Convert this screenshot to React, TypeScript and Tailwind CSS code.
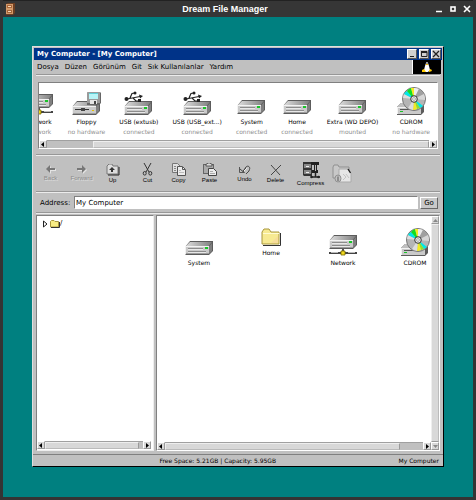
import { useId, useState } from "react";
import type { ReactNode } from "react";

type Kind = "drive" | "usb" | "floppy" | "network" | "cdrom";

const DRIVES: { name: string; status: string; kind: Kind }[] = [
  { name: "Network", status: "network", kind: "network" },
  { name: "Floppy", status: "no hardware", kind: "floppy" },
  { name: "USB (extusb)", status: "connected", kind: "usb" },
  { name: "USB (USB_ext...)", status: "connected", kind: "usb" },
  { name: "System", status: "connected", kind: "drive" },
  { name: "Home", status: "connected", kind: "drive" },
  { name: "Extra (WD DEPO)", status: "mounted", kind: "drive" },
  { name: "CDROM", status: "no hardware", kind: "cdrom" },
];

const MENU = ["Dosya", "Düzen", "Görünüm", "Git", "Sık Kullanılanlar", "Yardım"];

// Bevelled box of a disk drive, origin at its top left corner
function DriveBody({ y, slot = false }: { y: number; slot?: boolean }) {
  const id = useId();
  return (
    <g transform={`translate(0 ${y})`}>
      <defs>
        <linearGradient id={id} x1="0" x2="1" y1="0" y2="0">
          <stop offset="0" stopColor="#dcdcdc" />
          <stop offset="1" stopColor="#7e7e7e" />
        </linearGradient>
      </defs>
      <path d="M5 0H28V10L24 14H1L0 13V6Z" fill="#5c5c5c" />
      <path d="M5 1H27L23.500 5H1Z" fill={`url(#${id})`} />
      <path d="M24 5.500L27 2V10L24 13Z" fill="#808080" />
      <rect x="0" y="5" width="24" height="8" fill="#cacaca" />
      <path d="M0 5H24V6H1V13H0Z" fill="#f2f2f2" />
      <rect x="1" y="12" width="23" height="1" fill="#9c9c9c" />
      {slot ? (
        <>
          <rect x="3" y="8" width="14" height="1" fill="#333" />
          <rect x="9" y="7" width="4" height="3" fill="#444" />
          <rect x="20" y="9" width="2" height="1" fill="#e5c100" />
        </>
      ) : (
        <>
          <path d="M3 7.500H18M3 10.500H21" stroke="#8c8c8c" />
          <path d="M3 8.500H18M3 11.500H21" stroke="#e8e8e8" />
          <rect x="20" y="6" width="3" height="2" fill="#18c428" />
        </>
      )}
    </g>
  );
}

function Disc() {
  return (
    <g transform="translate(17 12)">
      <circle r="11.5" fill="#b5b5b5" stroke="#777" strokeWidth="1" />
      <path d="M0 0L-11 -1A11 11 0 0 1 -10 -5Z" fill="#ddd" />
      <path d="M0 0L-10 -5A11 11 0 0 1 -7 -8Z" fill="#00e8e8" />
      <path d="M0 0L-7 -8A11 11 0 0 1 -3 -11Z" fill="#10e020" />
      <path d="M0 0L-3 -11A11 11 0 0 1 0 -11Z" fill="#f4ec20" />
      <path d="M0 0L0 -11A11 11 0 0 1 5 -10Z" fill="#ececec" />
      <path d="M0 0L5 -10A11 11 0 0 1 10 -5Z" fill="#a0a0a0" />
      <path d="M0 0L10 -5A11 11 0 0 1 11 1Z" fill="#d6d6d6" />
      <path d="M0 0L9 7A11 11 0 0 1 6 9Z" fill="#00e8e8" />
      <path d="M0 0L6 9A11 11 0 0 1 3 10Z" fill="#90e030" />
      <path d="M0 0L3 10A11 11 0 0 1 -1 11Z" fill="#f4ec20" />
      <path d="M0 0L-1 11A11 11 0 0 1 -6 9Z" fill="#ddd" />
      <circle r="3.3" fill="#eee" stroke="#333" strokeWidth="1" />
      <circle r="1.4" fill="#fff" stroke="#777" strokeWidth="0.6" />
    </g>
  );
}

function DriveIcon({ kind }: { kind: Kind }) {
  return (
    <svg width="29" height="28" viewBox="0 0 29 28" aria-hidden="true" className="shrink-0">
      {kind === "drive" && <DriveBody y={13} />}
      {kind === "usb" && (
        <>
          <DriveBody y={14} />
          <path d="M3 12L16 9.500M6 11L8 6.500L11 6M9 11L12 14H15" fill="none" stroke="#222" strokeWidth="1.200" />
          <circle cx="2.500" cy="12" r="2" fill="#222" />
          <circle cx="11" cy="6" r="1.500" fill="#222" />
          <path d="M15 7.500L19 9L16 11.500Z" fill="#222" />
          <rect x="14" y="12" width="3" height="3" fill="#222" />
        </>
      )}
      {kind === "floppy" && (
        <>
          <DriveBody y={14} slot />
          <path d="M16 5H28L29 6V16L27 18H15V6Z" fill="#666" />
          <path d="M16 5H28V16H15V6Z" fill="#9a9a9a" />
          <rect x="17" y="6" width="9" height="6" fill="#b8f4f6" />
          <rect x="17" y="6" width="9" height="1" fill="#5fd0d8" />
          <rect x="18" y="13" width="7" height="4" fill="#e6e6e6" />
          <rect x="22" y="14" width="2" height="3" fill="#444" />
        </>
      )}
      {kind === "network" && (
        <>
          <DriveBody y={7} />
          <rect x="13" y="21" width="2" height="3" fill="#555" />
          <rect x="0" y="24" width="28" height="2" fill="#444" />
          <rect x="2" y="24" width="7" height="1" fill="#bbb" />
          <rect x="19" y="24" width="7" height="1" fill="#bbb" />
          <path d="M12 23H16V27H12Z" fill="#f0d820" stroke="#776a00" strokeWidth="0.8" />
        </>
      )}
      {kind === "cdrom" && (
        <>
          <path d="M4 16H26L27 17V25L24 28H0V20Z" fill="#5c5c5c" />
          <path d="M4 16H26L23 20H0Z" fill="#c0c0c0" />
          <rect x="0" y="20" width="24" height="7" fill="#cacaca" />
          <path d="M0 20H24V21H1V27H0Z" fill="#f2f2f2" />
          <path d="M3 22.500H20" stroke="#555" />
          <rect x="3" y="24" width="3" height="1" fill="#18c428" />
          <Disc />
        </>
      )}
    </svg>
  );
}

function FolderIcon() {
  return (
    <svg width="20" height="18" viewBox="0 0 20 18" aria-hidden="true">
      <path d="M1 4L3 1H8L10 4H18V16H1Z" fill="#f7ea92" stroke="#a8963c" />
      <path d="M19.500 5V17.500H2" fill="none" stroke="#333" />
      <path d="M2 5.500H18" stroke="#fffbd0" />
      <path d="M10 15L17 8V15Z" fill="#f6dc9a" />
    </svg>
  );
}

function PenguinIcon() {
  return (
    <svg width="12" height="11" viewBox="0 0 12 11" aria-hidden="true">
      <path d="M5 1H7L8 4L9 8L7 10H4L3 8L4 4Z" fill="#fff" />
      <rect x="5" y="0" width="2" height="2" fill="#999" />
      <rect x="5" y="2" width="2" height="1" fill="#f5b800" />
      <path d="M1 8L3 7L5 10H1ZM8 8L10 7L11 9L8 10Z" fill="#ffcc00" />
    </svg>
  );
}

function CabinetIcon() {
  return (
    <svg width="10" height="12" viewBox="0 0 10 12" aria-hidden="true">
      <path d="M1 1L3 0H10V10L8 12H1Z" fill="#6d3f22" />
      <rect x="1" y="1" width="7" height="10" fill="#d39a6a" />
      <rect x="2" y="2" width="5" height="3" fill="#a8663a" />
      <rect x="2" y="7" width="5" height="3" fill="#a8663a" />
      <path d="M3 3.500H6M3 8.500H6" stroke="#f4d8b8" />
    </svg>
  );
}

type Tool = { label: string; icon: ReactNode; disabled?: boolean };

const TOOLS: Tool[][] = [
  [
    {
      label: "Back",
      disabled: true,
      icon: (
        <svg width="10" height="9" viewBox="0 0 10 9" aria-hidden="true">
          <path d="M1 5L5 1V4H10V6H5V9Z" fill="#e4e4e4" />
          <path d="M0 4L4 0V3H9V5H4V8Z" fill="#777" />
        </svg>
      ),
    },
    {
      label: "Forward",
      disabled: true,
      icon: (
        <svg width="10" height="9" viewBox="0 0 10 9" aria-hidden="true">
          <path d="M10 5L6 1V4H1V6H6V9Z" fill="#e4e4e4" />
          <path d="M9 4L5 0V3H0V5H5V8Z" fill="#777" />
        </svg>
      ),
    },
    {
      label: "Up",
      icon: (
        <svg width="14" height="12" viewBox="0 0 14 12" aria-hidden="true">
          <path d="M1 2L3 0H6L7 2H12V10H1Z" fill="#ddd" stroke="#777" />
          <path d="M13 3V11H2" fill="none" stroke="#222" />
          <path d="M6 3L9 6H7V8H5V6H3Z" fill="#333" />
        </svg>
      ),
    },
  ],
  [
    {
      label: "Cut",
      icon: (
        <svg width="11" height="13" viewBox="0 0 11 13" fill="none" stroke="#333" aria-hidden="true">
          <path d="M2 0L7 9M9 0L4 9" />
          <ellipse cx="2.700" cy="10.300" rx="1.500" ry="1.800" />
          <ellipse cx="8.300" cy="10.300" rx="1.500" ry="1.800" />
        </svg>
      ),
    },
    {
      label: "Copy",
      icon: (
        <svg width="14" height="13" viewBox="0 0 14 13" aria-hidden="true">
          <path d="M.5 .5H5.500L8.500 3.500V9.500H.5Z" fill="#e0e0e0" stroke="#777" />
          <path d="M2 3.500H4M2 5.500H4M2 7.500H4" stroke="#888" />
          <path d="M5.500 3.500H10.500L13.500 6.500V12.500H5.500Z" fill="#ececec" stroke="#555" />
          <path d="M10.500 4V6.500H13" fill="none" stroke="#555" />
          <path d="M7 7.500H9M7 9.500H12" stroke="#bbb" />
        </svg>
      ),
    },
    {
      label: "Paste",
      icon: (
        <svg width="14" height="13" viewBox="0 0 14 13" aria-hidden="true">
          <rect x=".5" y="1.500" width="10" height="9" fill="#aaa" stroke="#666" />
          <path d="M3 3V1H4L5 0H7L8 1H9V3Z" fill="#ddd" stroke="#444" strokeWidth=".8" />
          <path d="M5.500 5.500H10.500L13.500 8.500V12.500H5.500Z" fill="#ececec" stroke="#444" />
          <path d="M7 8.500H10M7 10.500H12" stroke="#aaa" />
        </svg>
      ),
    },
  ],
  [
    {
      label: "Undo",
      icon: (
        <svg width="13" height="11" viewBox="0 0 13 11" fill="none" aria-hidden="true">
          <path d="M1.500 3V8.500H6.500L5 7L8 4" stroke="#555" />
          <path d="M2 5L5 7.500L8 3C10 1 12.500 3 11.500 5.500C11 8 9 8.500 8 10" stroke="#444" />
          <path d="M6 7L9 4" stroke="#eee" />
        </svg>
      ),
    },
    {
      label: "Delete",
      icon: (
        <svg width="12" height="12" viewBox="0 0 12 12" fill="none" aria-hidden="true">
          <path d="M1 1L10 11M11 1L1 11" stroke="#444" />
        </svg>
      ),
    },
  ],
  [
    {
      label: "Compress",
      icon: (
        <svg width="18" height="18" viewBox="0 0 18 18" aria-hidden="true">
          <path d="M1 1H10V15H2L1 14Z" fill="#333" />
          <rect x="2" y="3" width="7" height="4" fill="#888" />
          <rect x="2" y="9" width="7" height="4" fill="#888" />
          <path d="M4 5.500H7M4 11.500H7" stroke="#eee" />
          <path d="M9 1H17V4H15V9H16V12H10V9H12V4H9Z" fill="#222" />
          <rect x="13" y="4" width="1" height="6" fill="#bbb" />
          <path d="M13.500 12V16M9 16H18" stroke="#222" strokeWidth="1.500" />
          <circle cx="9.500" cy="16" r="1.300" fill="#222" />
          <circle cx="16.500" cy="16" r="1.300" fill="#222" />
        </svg>
      ),
    },
    {
      label: "",
      disabled: true,
      icon: (
        <svg width="20" height="19" viewBox="0 0 20 19" aria-hidden="true">
          <path d="M1 3L2 1H6L7 3H17V14H1Z" fill="#c8c8c8" stroke="#909090" />
          <path d="M7 5H16L19 9V18H7Z" fill="#e6e6e6" stroke="#aaa" />
          <path d="M16 5L18.500 9" stroke="#222" strokeWidth="1.400" />
          <ellipse cx="6" cy="14.500" rx="3" ry="3.500" fill="#c4c4c4" stroke="#909090" />
          <path d="M6 12.500V17" stroke="#777" strokeWidth="1.400" />
          <path d="M11 10L14 13L11 16M14 10L17 14" fill="none" stroke="#c4c4c4" />
        </svg>
      ),
    },
  ],
];

function ToolButton({ tool }: { tool: Tool }) {
  return (
    <button
      type="button"
      disabled={tool.disabled}
      aria-label={tool.label || "Properties"}
      className="flex w-[31px] flex-col items-center justify-center gap-px"
    >
      {tool.icon}
      {tool.label && (
        <span
          className={
            tool.disabled
              ? "font-['Liberation_Sans'] text-[6px] leading-[7px] text-[#8c8c8c] [text-shadow:1px_1px_0_#ddd]"
              : "font-['Liberation_Sans'] text-[6px] leading-[7px] text-black"
          }
        >
          {tool.label}
        </span>
      )}
    </button>
  );
}

function Separator() {
  return <div className="mx-[3px] h-[2px] shrink-0 border-t border-b border-t-[#979797] border-b-[#ececec]" />;
}

function Arrow({ dir }: { dir: "left" | "right" | "up" | "down" }) {
  const paths = {
    left: "M4 1V6L1 3.500Z",
    right: "M2 1V6L5 3.500Z",
    up: "M1 5H6L3.500 2Z",
    down: "M1 2H6L3.500 5Z",
  };
  const vertical = dir === "up" || dir === "down";
  return (
    <button
      type="button"
      aria-label={`Scroll ${dir}`}
      className="flex size-2 shrink-0 items-center justify-center border border-t-white border-l-white border-r-[#999] border-b-[#999] bg-[#d8d8d8]"
    >
      <svg width="7" height="7" viewBox="0 0 7 7" className="shrink-0" aria-hidden="true">
        <path d={paths[dir]} fill={vertical ? "#888" : "#000"} />
      </svg>
    </button>
  );
}

// start and size place the handle on its track, in percent
function HScroll({ start = 0, size }: { start?: number; size: number }) {
  return (
    <div className="flex h-2 shrink-0 bg-[#c0c0c0]">
      <Arrow dir="left" />
      <div className="flex-1 border-t border-[#a0a0a0]">
        <div
          className="h-full border border-t-[#eee] border-l-[#eee] border-r-[#999] border-b-[#bbb] bg-[#d8d8d8]"
          style={{ marginLeft: `${start}%`, width: `${size}%` }}
        />
      </div>
      <Arrow dir="right" />
    </div>
  );
}

function TitleButton({ label, children }: { label: string; children: ReactNode }) {
  return (
    <button
      type="button"
      aria-label={label}
      className="flex h-[10px] w-[10px] items-center justify-center border border-t-white border-l-white border-r-[#555] border-b-[#555] bg-[#d0d0d0]"
    >
      <svg width="8" height="8" viewBox="0 0 8 8" fill="none" stroke="#222" className="shrink-0" aria-hidden="true">
        {children}
      </svg>
    </button>
  );
}

function FileItem({ name, children }: { name: string; children: ReactNode }) {
  return (
    <div className="flex flex-col items-center gap-[3px] text-[6px] leading-2 text-black">
      {children}
      <span>{name}</span>
    </div>
  );
}

export default function App() {
  const [address, setAddress] = useState("My Computer");

  return (
    <div className="flex min-h-screen flex-col border-x-[3px] border-b-[3px] border-[#343434] bg-[#008080] font-['DejaVu_Sans',sans-serif] text-[7px] text-black">
      <header className="flex h-[17px] shrink-0 items-center border-t border-[#222] bg-[#363636] px-[2px] text-white">
        <CabinetIcon />
        <h1 className="flex-1 text-center font-['Liberation_Sans'] text-[9px] leading-3 font-bold">
          Dream File Manager
        </h1>
        <div className="flex items-center justify-end gap-[6px]">
          <button type="button" aria-label="Minimize">
            <svg width="8" height="8" viewBox="0 0 8 8" className="block">
              <path d="M1 6.500H7" stroke="#fff" strokeWidth="1.500" />
            </svg>
          </button>
          <button type="button" aria-label="Maximize">
            <svg width="8" height="8" viewBox="0 0 8 8" className="block">
              <rect x="2" y="2" width="4" height="4" fill="none" stroke="#fff" strokeWidth="1.600" />
            </svg>
          </button>
          <button type="button" aria-label="Close">
            <svg width="8" height="8" viewBox="0 0 8 8" className="block">
              <path d="M1 1L7 7M7 1L1 7" stroke="#fff" strokeWidth="1.600" />
            </svg>
          </button>
        </div>
      </header>

      <main className="mx-[29px] mt-[29px] mb-[30px] flex flex-1 flex-col border border-t-[#dfdfdf] border-l-[#dfdfdf] border-r-black border-b-black bg-[#c0c0c0]">
        <div className="mx-px mt-px flex h-3 shrink-0 items-center justify-between bg-[#003388] pr-px pl-[3px]">
          <h2 className="text-[7px] leading-3 font-bold text-white">My Computer - [My Computer]</h2>
          <div className="flex gap-[2px]">
            <TitleButton label="Minimize window">
              <path d="M2 6.500H6" />
            </TitleButton>
            <TitleButton label="Maximize window">
              <path d="M1 1.500H7V6.500H1.500V1M1 2.500H7" />
            </TitleButton>
            <TitleButton label="Close window">
              <path d="M1 1L7 7M7 1L1 7" strokeWidth="1.300" />
            </TitleButton>
          </div>
        </div>

        <nav className="flex h-[14px] shrink-0 items-stretch justify-between pr-[2px] pl-1">
          <div className="flex items-center gap-[6px]">
            {MENU.map((item) => (
              <button key={item} type="button" className="leading-3">
                {item}
              </button>
            ))}
          </div>
          <div className="flex w-[29px] items-center justify-center border-l border-white bg-black">
            <PenguinIcon />
          </div>
        </nav>
        <Separator />

        <section className="mx-[5px] mt-[6px] mb-[5px] shrink-0 border border-t-[#808080] border-l-[#808080] border-r-white border-b-white bg-white">
          <div className="flex h-[57px] items-end justify-end gap-[14px] overflow-hidden pr-[7px] pb-[3px]">
            {DRIVES.map((d) => (
              <div key={d.name} className="flex shrink-0 flex-col items-center text-[6px]">
                <DriveIcon kind={d.kind} />
                <span className="mt-[2px] leading-[10px]">{d.name}</span>
                <span className="leading-[10px] text-[#8f8f8f]">{d.status}</span>
              </div>
            ))}
          </div>
          <HScroll start={12} size={88} />
        </section>
        <Separator />

        <div className="flex h-[35px] shrink-0 items-stretch gap-[4px] pl-[2px]">
          {TOOLS.map((group, i) => (
            <div key={i} className="flex">
              {group.map((tool) => (
                <ToolButton key={tool.label} tool={tool} />
              ))}
            </div>
          ))}
        </div>
        <Separator />

        <form
          className="flex h-[19px] shrink-0 items-center gap-[2px] px-[5px]"
          onSubmit={(e) => e.preventDefault()}
        >
          <label htmlFor="address" className="w-[34px] pl-[2px] leading-3">
            Address:
          </label>
          <input
            id="address"
            value={address}
            onChange={(e) => setAddress(e.target.value)}
            className="h-[13px] min-w-0 flex-1 border border-t-[#808080] border-l-[#808080] border-r-white border-b-white bg-white pl-px text-[7px] outline-none"
          />
          <button
            type="submit"
            className="h-[12px] w-[18px] border border-t-white border-l-white border-r-[#666] border-b-[#666] bg-[#c8c8c8] leading-[10px]"
          >
            Go
          </button>
        </form>
        <Separator />

        <div className="mt-px mr-[3px] ml-[3px] flex flex-1 gap-[2px]">
          <aside className="flex w-[118px] shrink-0 flex-col border border-t-[#808080] border-l-[#808080] border-r-[#eee] border-b-[#eee] bg-white pr-[2px] pb-px">
            <div className="flex flex-1 items-start px-[6px] pt-[3px]">
              <button type="button" className="flex items-center gap-[2px] leading-[9px]">
                <svg width="5" height="8" viewBox="0 0 5 8" fill="none" stroke="#222" aria-hidden="true">
                  <path d="M.5 1V7L4 4Z" />
                </svg>
                <span className="flex items-center">
                  <svg width="10" height="8" viewBox="0 0 10 8" aria-hidden="true">
                    <path d="M.5 1.500L1.500 .5H4L5 1.500H8.500V7H.5Z" fill="#f7ec84" stroke="#a8963c" />
                    <path d="M9.500 2V7.500H1" fill="none" stroke="#333" />
                  </svg>
                  /
                </span>
              </button>
            </div>
            <HScroll size={96} />
          </aside>

          <section className="flex min-w-0 flex-1 border border-t-[#808080] border-l-[#808080] border-r-white border-b-white bg-white">
            <div className="flex min-w-0 flex-1 flex-col">
              <div className="grid flex-1 grid-cols-[repeat(4,72px)] content-start overflow-hidden pt-3 pl-[6px]">
                <FileItem name="System">
                  <DriveIcon kind="drive" />
                </FileItem>
                <FileItem name="Home">
                  <FolderIcon />
                </FileItem>
                <FileItem name="Network">
                  <DriveIcon kind="network" />
                </FileItem>
                <FileItem name="CDROM">
                  <DriveIcon kind="cdrom" />
                </FileItem>
              </div>
              <HScroll size={91} />
            </div>
            <div className="flex w-2 shrink-0 flex-col bg-[#c0c0c0]">
              <Arrow dir="up" />
              <div className="flex-1 border border-t-[#eee] border-l-[#eee] border-r-[#bbb] border-b-[#999] bg-[#d8d8d8]" />
              <Arrow dir="down" />
            </div>
          </section>
        </div>

        <footer className="mt-[3px] flex h-3 shrink-0 items-center border-t border-[#808080] px-1 text-[6px] leading-[10px]">
          <span className="flex-1 text-center">Free Space: 5.21GB | Capacity: 5.95GB</span>
          <span>My Computer</span>
        </footer>
      </main>
    </div>
  );
}
